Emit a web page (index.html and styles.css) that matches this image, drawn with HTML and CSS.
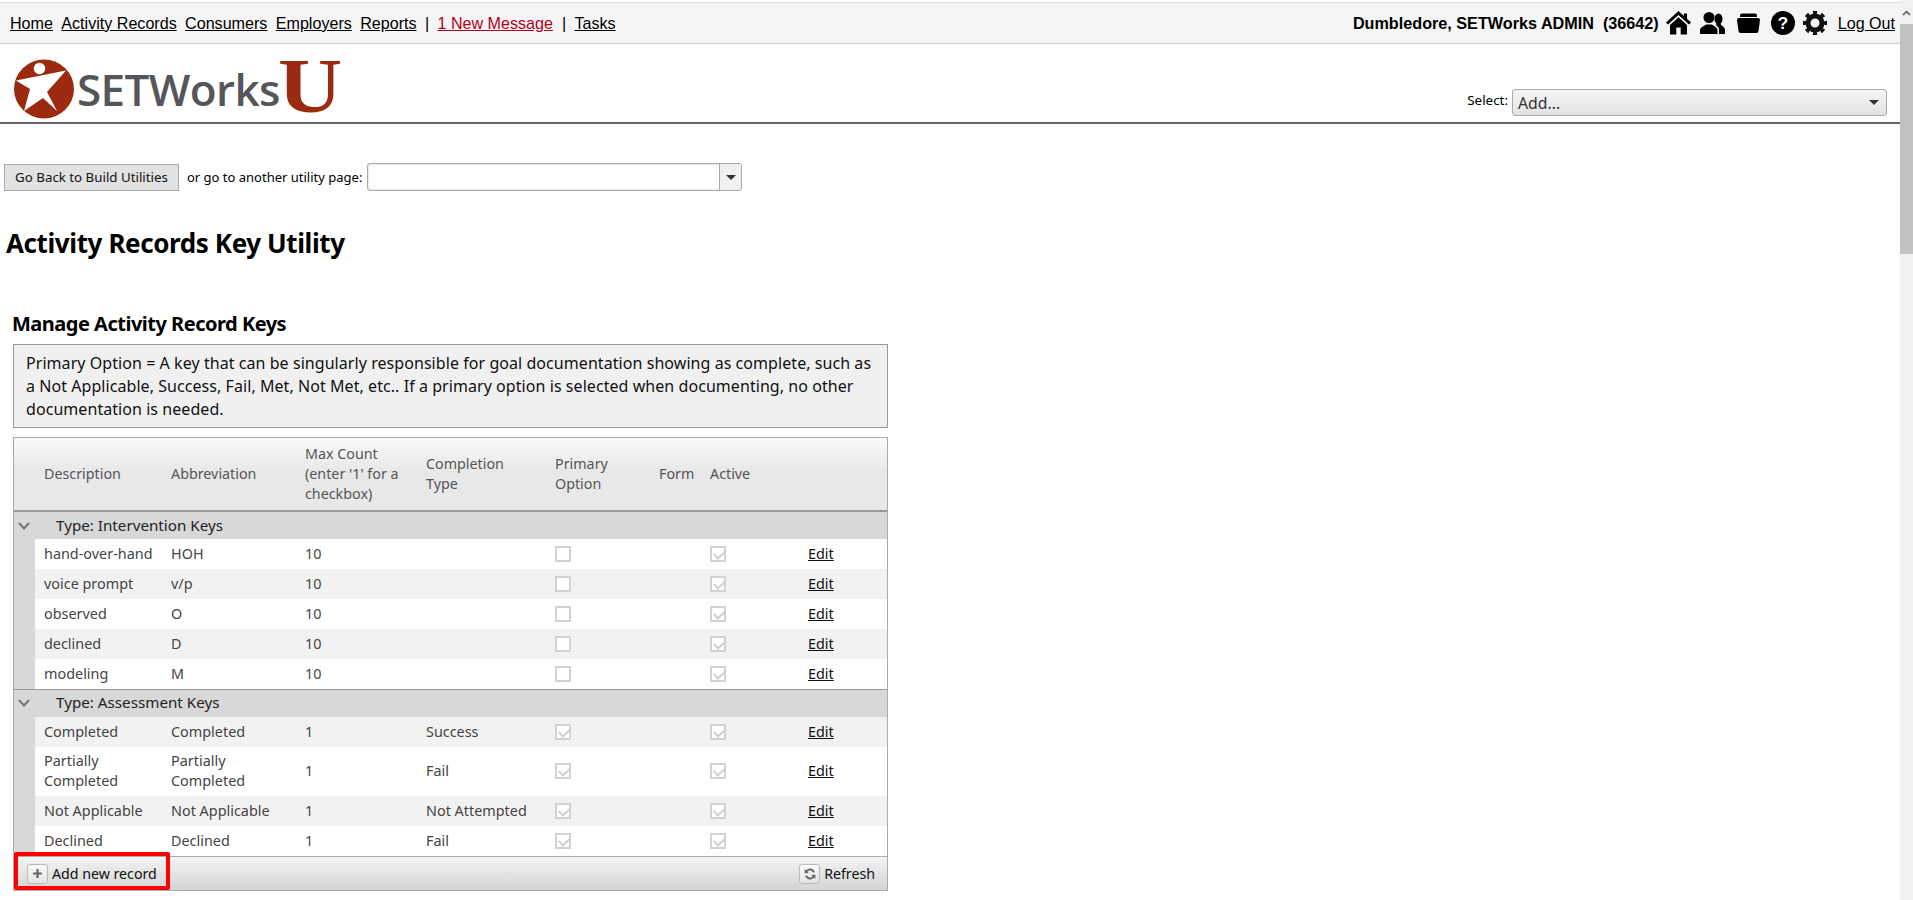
FILE: index.html
```html
<!DOCTYPE html>
<html lang="en">
<head>
<meta charset="utf-8">
<title>Activity Records Key Utility</title>
<link rel="stylesheet" href="styles.css">
</head>
<body>
<div class="page">
  <main class="main">
    <nav class="topbar">
      <div class="nav-links">
        <a href="#">Home</a><a href="#">Activity Records</a><a href="#">Consumers</a><a href="#">Employers</a><a href="#">Reports</a>
        <span class="sep">|</span>
        <a href="#" class="msg">1 New Message</a>
        <span class="sep">|</span>
        <a href="#">Tasks</a>
      </div>
      <div class="user">
        <strong class="user-name">Dumbledore, SETWorks ADMIN&nbsp; (36642)</strong>
        <svg class="ic ic-home" viewBox="0 0 25 24"><path d="M12.5 0 0 11.5 2 13.6 12.5 4 23 13.6 25 11.5 21 7.8V2.5H17.8V4.9Z"/><path d="M12.5 6.3 4 14V23.5H10.3V16.5H14.7V23.5H21V14Z"/></svg>
        <svg class="ic ic-people" viewBox="0 0 25 24"><circle cx="9" cy="6.5" r="5.5"/><path d="M0 23V19.5C0 16 4 15.5 5.8 13.5H12.2C14 15.5 17.5 16 17.5 19.5V23Z"/><ellipse cx="18.5" cy="8" rx="4" ry="5.5"/><path d="M19 23V19C19 16.5 17.5 15 15.5 14L17 13H20.5C21.5 15 25 15.5 25 19.5V23Z"/></svg>
        <svg class="ic ic-folder" viewBox="0 0 23 24"><path d="M3 4.5Q3 2.5 5 2.5H18Q20 2.5 20 4.5V6H3Z"/><path d="M0 9Q0 7 2 7H21Q23 7 23 9L21.5 20Q21.3 22 19.5 22H3.5Q1.7 22 1.5 20Z"/></svg>
        <svg class="ic ic-help" viewBox="0 0 24 24"><circle cx="12" cy="12" r="12"/><text x="12" y="18" class="help-mark">?</text></svg>
        <svg class="ic ic-gear" viewBox="0 0 24 24"><circle class="gear-ring" cx="12" cy="12" r="7"/><circle class="gear-teeth" cx="12" cy="12" r="10.2" pathLength="32"/></svg>
        <a href="#" class="logout">Log Out</a>
      </div>
    </nav>

    <header class="brand">
      <div class="logo">
        <svg class="logo-mark" viewBox="0 0 60 60"><ellipse cx="30" cy="30" rx="30" ry="29.5" fill="#9c2a10"/><circle cx="25.5" cy="9.5" r="5.7" fill="#fff"/><path d="M2 21.5 52 11.5 33 33 43 52 29 39 10 52 16 30Z" fill="#fff"/></svg>
        <span class="logo-name">SETWorks</span><span class="logo-u">U</span>
      </div>
      <div class="add-select">
        <label class="select-label">Select:</label>
        <div class="select-box"><span>Add...</span><i class="arrow"></i></div>
      </div>
    </header>

    <div class="toolbar">
      <button class="back-btn">Go Back to Build Utilities</button>
      <span class="toolbar-label">or go to another utility page:</span>
      <div class="combo"><span class="combo-input"></span><span class="combo-btn"><i class="arrow"></i></span></div>
    </div>

    <h1 class="title">Activity Records Key Utility</h1>

    <section class="manage">
      <h2 class="subtitle">Manage Activity Record Keys</h2>
      <p class="info">Primary Option = A key that can be singularly responsible for goal documentation showing as complete, such as a Not Applicable, Success, Fail, Met, Not Met, etc.. If a primary option is selected when documenting, no other documentation is needed.</p>

      <div class="grid">
        <table>
          <colgroup>
            <col class="c-indent"><col class="c-desc"><col class="c-abbr"><col class="c-max"><col class="c-comp"><col class="c-prim"><col class="c-form"><col class="c-act"><col class="c-edit">
          </colgroup>
          <thead>
            <tr>
              <th></th><th>Description</th><th>Abbreviation</th><th>Max Count<br>(enter '1' for a checkbox)</th><th>Completion<br>Type</th><th>Primary<br>Option</th><th>Form</th><th>Active</th><th></th>
            </tr>
          </thead>
          <tbody>
            <tr class="group first"><td class="chev"><svg viewBox="0 0 12 8"><path d="M1 1 6 6.5 11 1"/></svg></td><td colspan="8">Type: Intervention Keys</td></tr>
            <tr><td class="ind"></td><td>hand-over-hand</td><td>HOH</td><td>10</td><td></td><td><span class="cb"></span></td><td></td><td><span class="cb on"></span></td><td><a href="#">Edit</a></td></tr>
            <tr class="alt"><td class="ind"></td><td>voice prompt</td><td>v/p</td><td>10</td><td></td><td><span class="cb"></span></td><td></td><td><span class="cb on"></span></td><td><a href="#">Edit</a></td></tr>
            <tr><td class="ind"></td><td>observed</td><td>O</td><td>10</td><td></td><td><span class="cb"></span></td><td></td><td><span class="cb on"></span></td><td><a href="#">Edit</a></td></tr>
            <tr class="alt"><td class="ind"></td><td>declined</td><td>D</td><td>10</td><td></td><td><span class="cb"></span></td><td></td><td><span class="cb on"></span></td><td><a href="#">Edit</a></td></tr>
            <tr><td class="ind"></td><td>modeling</td><td>M</td><td>10</td><td></td><td><span class="cb"></span></td><td></td><td><span class="cb on"></span></td><td><a href="#">Edit</a></td></tr>
            <tr class="group"><td class="chev"><svg viewBox="0 0 12 8"><path d="M1 1 6 6.5 11 1"/></svg></td><td colspan="8">Type: Assessment Keys</td></tr>
            <tr class="alt"><td class="ind"></td><td>Completed</td><td>Completed</td><td>1</td><td>Success</td><td><span class="cb on"></span></td><td></td><td><span class="cb on"></span></td><td><a href="#">Edit</a></td></tr>
            <tr class="tall"><td class="ind"></td><td>Partially Completed</td><td>Partially Completed</td><td>1</td><td>Fail</td><td><span class="cb on"></span></td><td></td><td><span class="cb on"></span></td><td><a href="#">Edit</a></td></tr>
            <tr class="alt"><td class="ind"></td><td>Not Applicable</td><td>Not Applicable</td><td>1</td><td>Not Attempted</td><td><span class="cb on"></span></td><td></td><td><span class="cb on"></span></td><td><a href="#">Edit</a></td></tr>
            <tr><td class="ind"></td><td>Declined</td><td>Declined</td><td>1</td><td>Fail</td><td><span class="cb on"></span></td><td></td><td><span class="cb on"></span></td><td><a href="#">Edit</a></td></tr>
          </tbody>
        </table>
        <div class="grid-foot">
          <a href="#" class="foot-cmd add-cmd">
            <span class="foot-ic"><svg viewBox="0 0 10 10"><path d="M5 1V9M1 5H9"/></svg></span>Add new record
            <span class="highlight"></span>
          </a>
          <a href="#" class="foot-cmd">
            <span class="foot-ic refresh-ic"><svg viewBox="0 0 14 14"><path d="M12 5.2A5.2 5.2 0 0 0 3 3.4L1.6 2V6.2H5.8L4.4 4.8A3.3 3.3 0 0 1 10 5.6Z"/><path d="M2 8.8A5.2 5.2 0 0 0 11 10.6L12.4 12V7.8H8.2L9.6 9.2A3.3 3.3 0 0 1 4 8.4Z"/></svg></span>Refresh
          </a>
        </div>
      </div>
    </section>
  </main>

  <aside class="scrollbar">
    <svg class="sb-up" viewBox="0 0 9 6"><path d="M1 5 4.5 1.5 8 5"/></svg>
    <div class="sb-thumb"></div>
  </aside>
</div>
</body>
</html>
```

FILE: styles.css
```css
* { box-sizing: border-box; }
html, body { margin: 0; padding: 0; height: 900px; overflow: hidden; background: #fff; }
body { font-family: "Noto Sans", "Open Sans", sans-serif; font-size: 14px; color: #000; }
a { color: inherit; }

.page { display: flex; width: 1913px; height: 900px; }
.main { width: 1900px; flex: none; padding-top: 2px; }

.topbar {
  display: flex; justify-content: space-between; align-items: center;
  height: 42px; padding: 0 5px 0 10px;
  background: #f5f5f5; border-top: 1px solid #ddd; border-bottom: 1px solid #ccc;
  font-family: "Liberation Sans", Arial, sans-serif; font-size: 16.1px;
}
.nav-links { display: flex; align-items: center; }
.nav-links a { margin-right: 8.4px; }
.nav-links a.msg { color: #b00020; margin-right: 9px; }
.sep { margin-right: 8.4px; }
.user { display: flex; align-items: center; }
.user-name { font-size: 16.2px; margin-right: 7px; }
.ic { display: block; height: 24px; flex: none; margin-right: 9px; }
.ic-home { width: 25px; }
.ic-people { width: 25px; margin-right: 12px; }
.ic-folder { width: 23px; margin-right: 11px; }
.ic-help { width: 24px; margin-right: 8px; }
.ic-gear { width: 24px; margin-right: 11px; }
.help-mark { font: bold 17px "Liberation Sans", sans-serif; fill: #fff; text-anchor: middle; }
.gear-ring { fill: none; stroke: #111; stroke-width: 5; }
.gear-teeth { fill: none; stroke: #111; stroke-width: 4; stroke-dasharray: 2 2; stroke-dashoffset: 1; }

.brand {
  display: flex; justify-content: space-between; align-items: flex-end;
  height: 80px; padding: 0 13px 6px 14px;
  border-bottom: 2px solid #666;
}
.logo { display: flex; align-items: center; height: 60px; margin-bottom: -3px; }
.logo-mark { width: 60px; height: 60px; flex: none; margin-right: 3px; }
.logo-name { font-family: "Open Sans", sans-serif; font-weight: 600; font-size: 44px; letter-spacing: -.6px; color: #55565a; line-height: 60px; }
.logo-u {
  font-family: "Liberation Serif", serif; font-weight: 700; font-size: 78px; color: #9c2a10; line-height: 60px;
  margin-left: -2px; position: relative; top: -3px; transform: scaleX(1.14); transform-origin: left center;
}
.add-select { display: flex; align-items: center; }
.select-label { font-size: 13.4px; margin-right: 4px; margin-top: -5px; }
.select-box {
  display: flex; justify-content: space-between; align-items: center;
  width: 375px; height: 27px; padding: 0 7px 0 5px;
  border: 1px solid #aaa; border-radius: 3px;
  background: linear-gradient(#f6f6f6, #e2e2e2);
  font-size: 15.8px; color: #333;
}
.arrow { display: block; width: 0; height: 0; border: 5px solid transparent; border-top-color: #333; border-bottom: 0; }

.toolbar { display: flex; align-items: center; height: 28px; margin: 39px 0 0 4px; }
.back-btn {
  width: 175px; height: 27px; padding: 0;
  border: 1px solid #aaa; background: #e2e2e2;
  font: 13.3px "Noto Sans", sans-serif; color: #111;
}
.toolbar-label { font-size: 13px; margin: 0 5px 0 8px; }
.combo { display: flex; width: 375px; height: 28px; border: 1px solid #aaa; border-radius: 3px; overflow: hidden; box-shadow: inset 0 0 2px #bbb; }
.combo-input { flex: 1; }
.combo-btn { width: 22px; display: flex; align-items: center; justify-content: center; border-left: 1px solid #aaa; background: #f0f0f0; }

.title { margin: 35px 0 0 6px; font-size: 26px; line-height: 34px; font-weight: 700; letter-spacing: -.4px; }
.manage { margin: 51px 0 0 13px; width: 875px; }
.subtitle { margin: 0 0 0 -1px; font-size: 20px; line-height: 26px; font-weight: 700; letter-spacing: -.5px; }
.info {
  margin: 7px 0 0; padding: 7px 12px 7px;
  background: #f0f0f0; border: 1px solid #999;
  font-size: 16px; letter-spacing: .06px; line-height: 23px; height: 84px; color: #111;
}

.grid { margin-top: 9px; border: 1px solid #aaa; }
table { border-collapse: collapse; table-layout: fixed; width: 873px; }
.c-indent { width: 21px; }
.c-desc { width: 127px; }
.c-abbr { width: 134px; }
.c-max { width: 121px; }
.c-comp { width: 129px; }
.c-prim { width: 104px; }
.c-form { width: 51px; }
.c-act { width: 98px; }
.c-edit { width: 88px; }

th {
  height: 73px; padding: 0 9px; text-align: left; font-weight: 400; font-size: 14.3px; line-height: 20px; color: #555;
  background: linear-gradient(#fafafa, #e8e8e8 45%, #e8e8e8);
  border-bottom: 2px solid #999;
}
td { height: 30px; padding: 0 9px; font-size: 14.4px; line-height: 20px; color: #444; }
td a { color: #111; }
tr.alt td { background: #f2f2f2; }
tr.tall td { padding-top: 4px; padding-bottom: 5px; }
td.ind { background: #d8d8d8 !important; padding: 0; }
tr.group td { background: #d8d8d8; height: 28px; color: #222; font-size: 15.2px; border-top: 1px solid #999; padding-left: 21px; padding-bottom: 2px; }
tr.group.first td { border-top: 0; height: 28px; }
tr.group td.chev { padding: 0 0 0 4px; }
.chev svg { display: block; width: 12px; height: 8px; fill: none; stroke: #777; stroke-width: 2; }
.cb { display: block; width: 16px; height: 16px; border: 2px solid #d2d2d2; background: #fff; position: relative; }
.cb.on::after {
  content: ""; position: absolute; left: 4px; top: 0; width: 5px; height: 9px;
  border: solid #d0d0d0; border-width: 0 2px 2px 0; transform: rotate(48deg);
}

.grid-foot {
  display: flex; justify-content: space-between; align-items: center;
  height: 34px; padding: 0 12px 0 13px;
  background: linear-gradient(#f4f4f4, #d4d4d4);
  border-top: 1px solid #aaa;
}
.foot-cmd { display: flex; align-items: center; color: #111; text-decoration: none; font-size: 14.2px; position: relative; }
.foot-ic { display: flex; align-items: center; justify-content: center; width: 21px; height: 20px; margin-right: 4px; border: 1px solid #bbb; border-radius: 3px; background: linear-gradient(#fafafa, #e4e4e4); }
.foot-ic svg { width: 11px; height: 11px; fill: none; stroke: #666; stroke-width: 2; }
.refresh-ic svg { width: 14px; height: 14px; fill: #666; stroke: none; }
.highlight { position: absolute; left: -13px; top: -12px; width: 156px; height: 38px; border: 4px solid #f00; border-radius: 2px; pointer-events: none; }

.scrollbar { width: 13px; flex: none; background: #f1f1f1; padding-top: 10px; }
.sb-up { display: block; width: 9px; height: 6px; margin: 0 auto 8px; fill: none; stroke: #555; stroke-width: 1.5; }
.sb-thumb { height: 230px; background: #c1c1c1; }
```
